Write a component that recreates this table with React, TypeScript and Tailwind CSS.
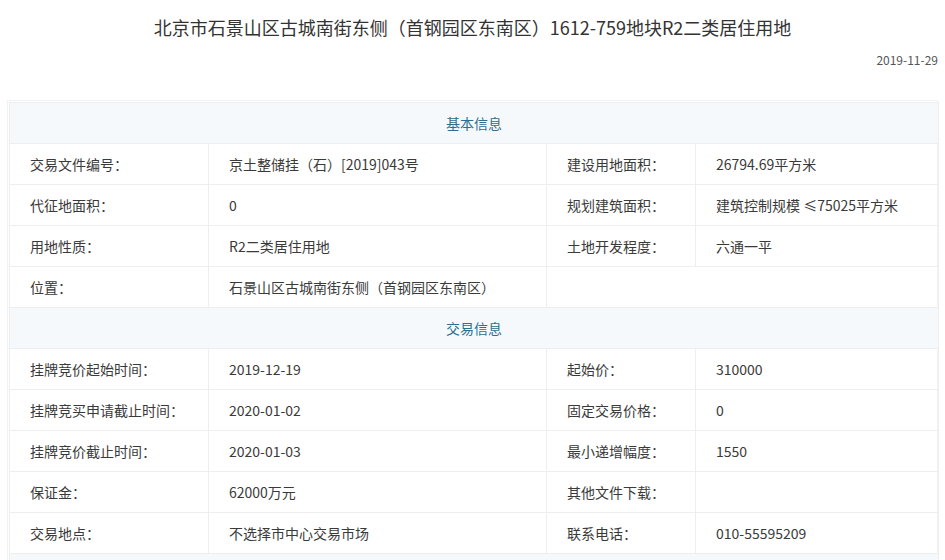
import React from "react";

type Row =
  | { kind: "head"; title: string }
  | { kind: "pair"; l1: string; v1: string; l2?: string; v2?: string; wide?: boolean };

const rows: Row[] = [
  { kind: "head", title: "基本信息" },
  { kind: "pair", l1: "交易文件编号：", v1: "京土整储挂（石）[2019]043号", l2: "建设用地面积：", v2: "26794.69平方米" },
  { kind: "pair", l1: "代征地面积：", v1: "0", l2: "规划建筑面积：", v2: "建筑控制规模 ≤75025平方米" },
  { kind: "pair", l1: "用地性质：", v1: "R2二类居住用地", l2: "土地开发程度：", v2: "六通一平" },
  { kind: "pair", l1: "位置：", v1: "石景山区古城南街东侧（首钢园区东南区）", wide: true },
  { kind: "head", title: "交易信息" },
  { kind: "pair", l1: "挂牌竞价起始时间：", v1: "2019-12-19", l2: "起始价：", v2: "310000" },
  { kind: "pair", l1: "挂牌竞买申请截止时间：", v1: "2020-01-02", l2: "固定交易价格：", v2: "0" },
  { kind: "pair", l1: "挂牌竞价截止时间：", v1: "2020-01-03", l2: "最小递增幅度：", v2: "1550" },
  { kind: "pair", l1: "保证金：", v1: "62000万元", l2: "其他文件下载：", v2: "" },
  { kind: "pair", l1: "交易地点：", v1: "不选择市中心交易市场", l2: "联系电话：", v2: "010-55595209" },
];

const cell = "h-[41px] border border-[#eceef0] px-[20px] text-[14px] text-[#3a3a3a] align-middle whitespace-nowrap";

export default function App() {
  return (
    <div
      className="w-[945px] h-[560px] overflow-hidden bg-white"
      style={{ fontFamily: '"Noto Sans CJK SC", "Noto Sans", sans-serif' }}
    >
      {/* Title */}
      <h1 className="pt-[12px] text-center text-[18px] leading-[30px] text-[#333] font-normal">
        北京市石景山区古城南街东侧（首钢园区东南区）1612-759地块R2二类居住用地
      </h1>
      <div className="mt-[8px] pr-[7px] text-right text-[12px] leading-[20px] text-[#555]">2019-11-29</div>

      {/* Detail table */}
      <div className="mt-[30px] ml-[7px] w-[931px] border border-[#f0f2f4] p-[1px]">
        <table className="w-[929px] table-fixed border-collapse">
          <colgroup>
            <col className="w-[199px]" />
            <col className="w-[338px]" />
            <col className="w-[149px]" />
            <col className="w-[243px]" />
          </colgroup>
          <tbody>
            {rows.map((r, i) =>
              r.kind === "head" ? (
                <tr key={i}>
                  <td colSpan={4} className={`${cell} bg-[#f6f9fb] text-center !text-[#2d6f8e]`}>
                    {r.title}
                  </td>
                </tr>
              ) : (
                <tr key={i}>
                  <td className={cell}>{r.l1}</td>
                  <td className={cell}>{r.v1}</td>
                  {r.wide ? (
                    <td colSpan={2} className={cell} />
                  ) : (
                    <>
                      <td className={cell}>{r.l2}</td>
                      <td className={cell}>{r.v2}</td>
                    </>
                  )}
                </tr>
              )
            )}
            <tr>
              <td colSpan={4} className={`${cell} bg-[#f6f9fb]`} />
            </tr>
          </tbody>
        </table>
      </div>
    </div>
  );
}
